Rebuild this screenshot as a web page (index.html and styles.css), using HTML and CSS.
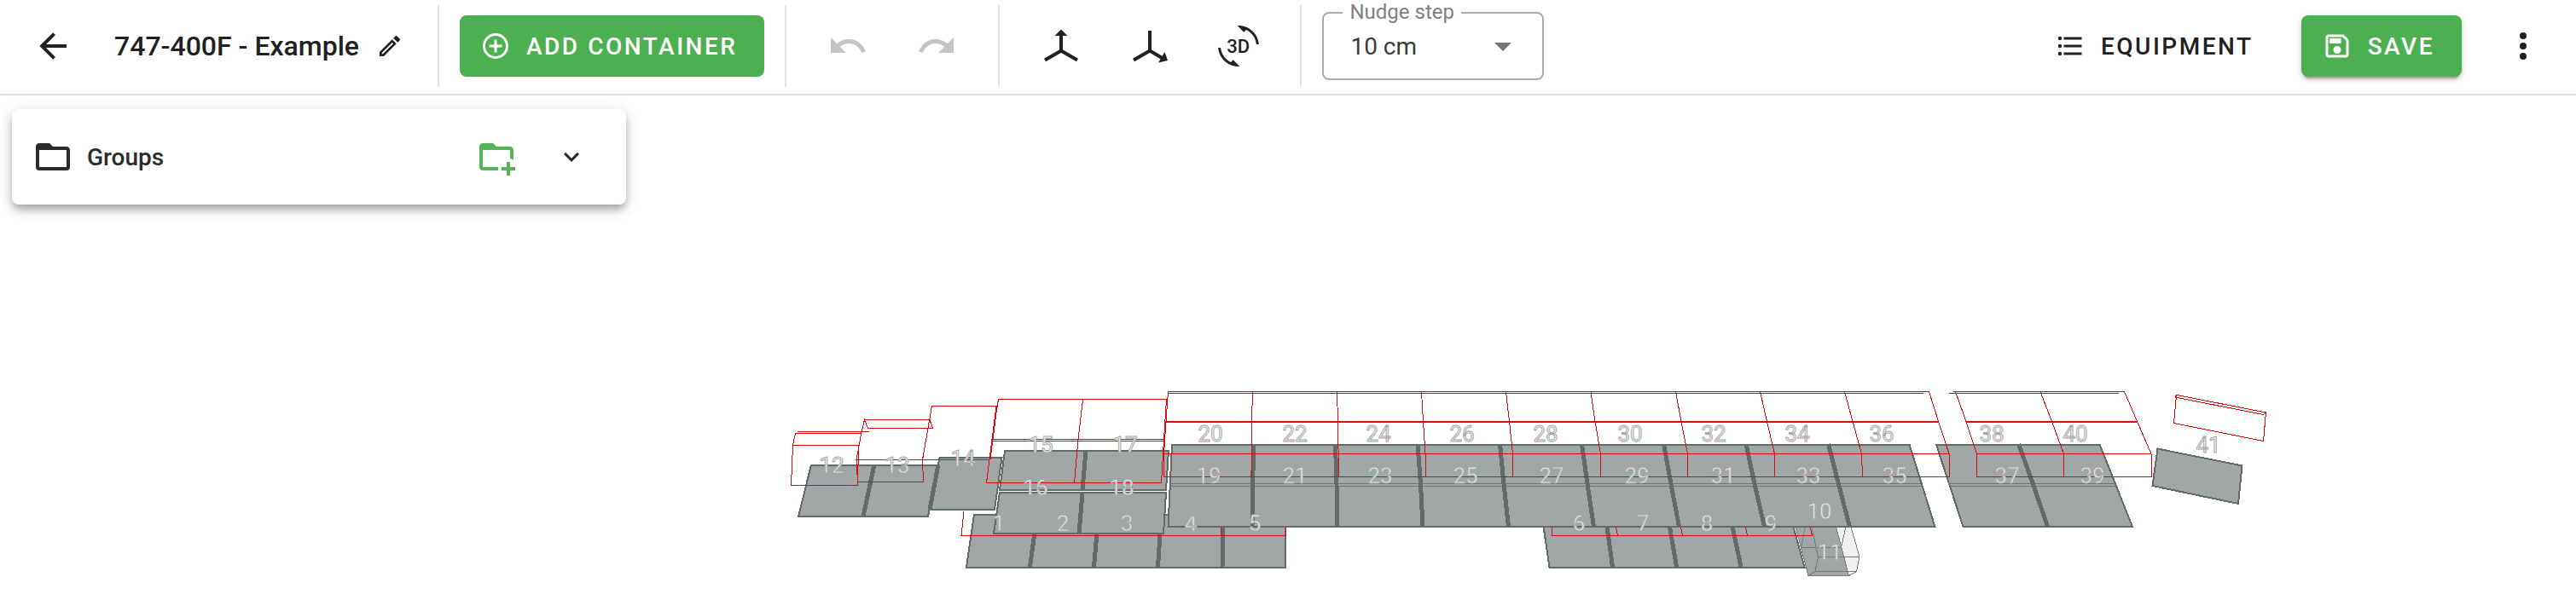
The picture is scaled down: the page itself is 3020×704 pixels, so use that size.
FILE: index.html
```html
<!DOCTYPE html>
<html lang="en">
<head>
<meta charset="utf-8">
<meta name="viewport" content="width=device-width, initial-scale=1">
<title>747-400F - Example</title>
<link rel="stylesheet" href="styles.css">
</head>
<body>
<header class="toolbar">
  <div class="group group-title">
    <button class="icon-btn back" type="button" aria-label="Back"><svg class="icon" viewBox="0 0 24 24"><path d="M20,11V13H8L13.5,18.5L12.08,19.92L4.16,12L12.08,4.08L13.5,5.5L8,11H20Z"/></svg></button>
    <h1 class="title">747-400F - Example</h1>
    <button class="icon-btn" type="button" aria-label="Rename"><svg class="icon icon-small" viewBox="0 0 24 24"><path d="M14.06,9L15,9.94L5.92,19H5V18.08L14.06,9M17.66,3C17.41,3 17.15,3.1 16.96,3.29L15.13,5.12L18.88,8.87L20.71,7.04C21.1,6.65 21.1,6 20.71,5.63L18.37,3.29C18.17,3.09 17.92,3 17.66,3M14.06,6.19L3,17.25V21H6.75L17.81,9.94L14.06,6.19Z"/></svg></button>
  </div>
  <div class="group group-add">
    <button class="btn btn-primary" type="button"><svg class="icon icon-medium" viewBox="0 0 24 24"><path d="M12,20C7.59,20 4,16.41 4,12C4,7.59 7.59,4 12,4C16.41,4 20,7.59 20,12C20,16.41 16.41,20 12,20M12,2A10,10 0 0,0 2,12A10,10 0 0,0 12,22A10,10 0 0,0 22,12A10,10 0 0,0 12,2M13,7H11V11H7V13H11V17H13V13H17V11H13V7Z"/></svg><span>ADD CONTAINER</span></button>
  </div>
  <div class="group group-icons">
    <button class="icon-btn" type="button" aria-label="Undo" disabled><svg class="icon" viewBox="0 0 24 24"><path d="M12.5,8C9.85,8 7.45,9 5.6,10.6L2,7V16H11L7.38,12.38C8.77,11.22 10.54,10.5 12.5,10.5C16.04,10.5 19.05,12.81 20.1,16L22.47,15.22C21.08,11.03 17.15,8 12.5,8Z"/></svg></button>
    <button class="icon-btn" type="button" aria-label="Redo" disabled><svg class="icon" viewBox="0 0 24 24"><path d="M18.4,10.6C16.55,9 14.15,8 11.5,8C6.85,8 2.92,11.03 1.54,15.22L3.9,16C4.95,12.81 7.95,10.5 11.5,10.5C13.45,10.5 15.23,11.22 16.62,12.38L13,16H22V7L18.4,10.6Z"/></svg></button>
  </div>
  <div class="group group-icons">
    <button class="icon-btn" type="button" aria-label="Vertical axis"><svg class="icon" viewBox="0 0 48 48"><path class="axis" d="M24 8V29.5L5 40.5M24 29.5L43 40.5"/><path d="M24 4.5L31.5 12H16.5Z"/></svg></button>
    <button class="icon-btn" type="button" aria-label="Horizontal axis"><svg class="icon" viewBox="0 0 48 48"><path class="axis" d="M24 6V29.5L5 40.5M24 29.5L40 39"/><path d="M41.5 31L45 41L34 43.5Z"/></svg></button>
    <button class="icon-btn" type="button" aria-label="Rotate"><svg class="icon" viewBox="0 0 24 24"><path d="M7.52 21.48C4.25 19.94 1.91 16.76 1.55 13H.05C.56 19.16 5.71 24 12 24l.66-.03-3.81-3.81zM12 0l-.66.03 3.81 3.81 1.33-1.33c3.27 1.55 5.61 4.72 5.96 8.49h1.5C23.44 4.84 18.29 0 12 0z"/><text class="icon-text" x="11.9" y="15.9">3D</text></svg></button>
  </div>
  <div class="group group-field">
    <div class="field">
      <label class="field-label" for="nudge">Nudge step</label>
      <select class="field-select" id="nudge"><option>10 cm</option><option>50 cm</option></select>
      <svg class="icon field-arrow" viewBox="0 0 24 24"><path d="M7,10L12,15L17,10H7Z"/></svg>
    </div>
  </div>
  <div class="actions">
    <button class="btn btn-text" type="button"><svg class="icon icon-medium" viewBox="0 0 24 24"><path d="M7,5H21V7H7V5M7,13V11H21V13H7M4,4.5A1.5,1.5 0 0,1 5.5,6A1.5,1.5 0 0,1 4,7.5A1.5,1.5 0 0,1 2.5,6A1.5,1.5 0 0,1 4,4.5M4,10.5A1.5,1.5 0 0,1 5.5,12A1.5,1.5 0 0,1 4,13.5A1.5,1.5 0 0,1 2.5,12A1.5,1.5 0 0,1 4,10.5M7,19V17H21V19H7M4,16.5A1.5,1.5 0 0,1 5.5,18A1.5,1.5 0 0,1 4,19.5A1.5,1.5 0 0,1 2.5,18A1.5,1.5 0 0,1 4,16.5Z"/></svg><span>EQUIPMENT</span></button>
    <button class="btn btn-primary btn-raised" type="button"><svg class="icon icon-medium" viewBox="0 0 24 24"><path d="M17 3H5C3.89 3 3 3.9 3 5V19C3 20.1 3.89 21 5 21H19C20.1 21 21 20.1 21 19V7L17 3M19 19H5V5H16.17L19 7.83V19M12 12C10.34 12 9 13.34 9 15S10.34 18 12 18 15 16.66 15 15 13.66 12 12 12M6 6H15V10H6V6Z"/></svg><span>SAVE</span></button>
    <button class="icon-btn more" type="button" aria-label="More"><svg class="icon" viewBox="0 0 24 24"><path d="M12,16A2,2 0 0,1 14,18A2,2 0 0,1 12,20A2,2 0 0,1 10,18A2,2 0 0,1 12,16M12,10A2,2 0 0,1 14,12A2,2 0 0,1 12,14A2,2 0 0,1 10,12A2,2 0 0,1 12,10M12,4A2,2 0 0,1 14,6A2,2 0 0,1 12,8A2,2 0 0,1 10,6A2,2 0 0,1 12,4Z"/></svg></button>
  </div>
</header>
<main class="workspace">
  <svg class="scene" viewBox="0 112 3020 592" role="img" aria-label="Aircraft loading positions">
    <!-- lower deck -->
    <g class="deck">
      <path d="M1142 603.5H1507V665.5H1133Z"/>
      <path d="M1804 580H2092L2115.5 665.5H1816.5Z"/>
    </g>
    <path class="rail" d="M1216 603L1207.5 665M1288 603L1282.5 665M1361.5 603L1357.5 665M1434 603L1433 665M1884 618L1890.5 665M1957.5 618L1965.5 665M2031 618L2041 665"/>
    <path class="bulk" d="M2105 618H2152.5L2167.5 675.5H2120Z"/>
    <path class="bulk-light" d="M2152.5 618H2170L2180 653L2176.5 670.5L2167.5 675.5Z"/>
    <path class="bulk-line" d="M2105 618L2120 675.5H2167.5L2176.5 670.5L2180 653L2170 618M2152.5 618L2167.5 675.5M2116.5 618L2111.5 642.5H2158.5L2164 618M2124 618L2131.5 653.5H2180M2131.5 653.5L2128 670.5H2176.5M2128 670.5L2120 675.5"/>
    <path class="bound" d="M1130 600L1127 628.5H1507.5V603M1431.5 618V628M1819 618L1820 628.5H2124.5L2122 618M1894.5 618L1896.5 628M1970.5 618L1972.5 628M2046.5 618L2048.5 628"/>
    <!-- main deck -->
    <path class="gap" d="M1368 528H1374L1370 603H1364Z"/>
    <g class="deck">
      <path d="M951 545.5H1100L1088 606H936Z"/>
      <path d="M1101.5 537H1174.5L1166 598H1090Z"/>
      <path d="M1178 529H1370L1367 575H1172Z"/>
      <path d="M1172 577.5H1367L1364 626H1165Z"/>
      <path d="M1374 521.5H2238.5L2268.5 618H1369.5Z"/>
      <path d="M2270 521.5H2461.5L2500 618H2301.5Z"/>
      <path d="M2529.5 526.5L2628.5 546.5L2624 591L2523.5 570Z"/>
    </g>
    <path class="seam" d="M1371 567.5H2252M1371 570.5H2253M2284 567.5H2480M2286 570.5H2481"/>
    <path class="rail" d="M1025 545L1012 606M1100 545L1090 598M1273 529L1269 575M1269 578L1265 626M1470 521L1468.5 568L1468 618M1565.5 521L1567 568L1567.5 618M1662 521L1665.5 568L1668 618M1758.5 521L1763 568L1768.5 618M1854.5 521L1861 568L1868.5 618M1950.5 521L1959 568L1968.5 618M2047 521L2057 568L2068.5 618M2143.5 521L2155.5 568L2168.5 618M2366.5 521L2383.5 568L2400.5 618"/>
    <!-- contour limits -->
    <path class="bound" d="M934.5 506.5H1018.5M1010 508.5H932.5L929.5 522.5L927.5 569.5H1005.5L1006.5 522.5M929.5 522.5H1006.5
      M1013.5 492.5H1090L1093.5 502.5H1017.5L1013.5 492.5L1010 507L1004 539.5L1005.5 565.5H1082.5L1081.5 539.5L1092.5 476.5H1169L1160 539.5H1004
      M1170.5 468.5H1367.5L1364.5 516L1361.5 566.5H1156.5L1163 516Z M1163 515.5H1364.5M1163 517.5H1364.5M1269.5 468.5L1264 516L1259.5 566.5
      M1369.5 461.5H2255M1364.5 532.5H2285V559.5H1365L1364.5 532.5L1367 494.5L1369.5 459.5H2261.5L2272.5 494.5L2285 532.5
      M1468.5 459.5L1467.5 494.5L1467 559M1567.5 459.5L1568.5 494.5L1569.5 559M1666.5 459.5L1668.5 494.5L1671 532.5V559M1765.5 459.5L1769.5 494.5L1773.5 532.5V559M1865 459.5L1870 494.5L1876.5 532.5V559M1964.5 459.5L1971 494.5L1978.5 532.5V559M2063.5 459.5L2071.5 494.5L2080.5 532.5V559M2162.5 459.5L2172 494.5L2182.5 532.5L2183.5 559
      M2284.5 461.5H2484M2290 459.5H2490.5L2505.5 494.5L2522 532.5L2522.5 559.5H2317.5V532.5L2305 494.5L2292.5 459.5M2317.5 532.5H2522M2392 459.5L2405.5 494.5L2419.5 532.5V559
      M2552 463.5L2656.5 484L2653.5 517.5L2548.5 496.5L2551.5 463.5M2656.5 484L2653.5 486.5L2550 466L2551.5 463.5"/>
    <path class="bound bound-thick" d="M1367 495H2273M2305 495H2506M1168.5 476.5L1160.5 539"/>
    <g class="labels">
      <text x="1171" y="623">1</text><text x="1246" y="623">2</text><text x="1321" y="623">3</text><text x="1396" y="623">4</text><text x="1471" y="623">5</text>
      <text x="1851" y="623">6</text><text x="1926" y="623">7</text><text x="2001" y="623">8</text><text x="2076" y="623">9</text><text x="2133" y="609">10</text><text x="2145" y="657">11</text>
      <text x="975" y="555">12</text><text x="1052" y="555">13</text><text x="1129" y="547">14</text>
      <text x="1220" y="531">15</text><text x="1214" y="581">16</text><text x="1319" y="531">17</text><text x="1315" y="581">18</text>
      <text x="1417" y="567">19</text><text x="1419" y="518">20</text><text x="1518" y="567">21</text><text x="1518" y="518">22</text><text x="1618" y="567">23</text><text x="1616" y="518">24</text><text x="1718" y="567">25</text><text x="1714" y="518">26</text><text x="1819" y="567">27</text><text x="1812" y="518">28</text><text x="1919" y="567">29</text><text x="1911" y="518">30</text><text x="2020" y="567">31</text><text x="2009" y="518">32</text><text x="2120" y="567">33</text><text x="2107" y="518">34</text><text x="2221" y="567">35</text><text x="2206" y="518">36</text>
      <text x="2353" y="567">37</text><text x="2335" y="518">38</text><text x="2453" y="567">39</text><text x="2433" y="518">40</text><text x="2589" y="531">41</text>
    </g>
  </svg>
  <section class="panel">
    <svg class="icon" viewBox="0 0 24 24"><path d="M20,18H4V8H20M20,6H12L10,4H4C2.89,4 2,4.89 2,6V18A2,2 0 0,0 4,20H20A2,2 0 0,0 22,18V8C22,6.89 21.1,6 20,6Z"/></svg>
    <h2 class="panel-title">Groups</h2>
    <button class="icon-btn panel-add" type="button" aria-label="Add group"><svg class="icon" viewBox="0 0 24 24"><path d="M13 19C13 19.34 13.04 19.67 13.09 20H4C2.9 20 2 19.11 2 18V6C2 4.89 2.89 4 4 4H10L12 6H20C21.1 6 22 6.89 22 8V13.81C21.39 13.46 20.72 13.22 20 13.09V8H4V18H13.09C13.04 18.33 13 18.66 13 19M20 18V15H18V18H15V20H18V23H20V20H23V18H20Z"/></svg></button>
    <button class="icon-btn" type="button" aria-label="Expand"><svg class="icon icon-medium" viewBox="0 0 24 24"><path d="M7.41,8.58L12,13.17L16.59,8.58L18,10L12,16L6,10L7.41,8.58Z"/></svg></button>
  </section>
</main>
</body>
</html>
```
FILE: styles.css
```css
* { box-sizing: border-box; }

body {
  margin: 0;
  background: #fff;
  color: #212121;
  font-family: Roboto, "Liberation Sans", sans-serif;
  font-size: 28px;
}

button {
  margin: 0;
  border: 0;
  background: none;
  color: inherit;
  font: inherit;
  cursor: pointer;
}

.toolbar {
  display: flex;
  align-items: center;
  padding: 6px 38px 8px;
  border-bottom: 2px solid #e0e0e0;
}

.group {
  display: flex;
  align-items: center;
  min-height: 96px;
  border-right: 2px solid #e4e4e4;
}

.group-title { padding-right: 40px; }
.group-add { padding: 0 24px; }
.group-icons { gap: 56px; padding: 0 48px; }
.group-field { padding-left: 24px; border-right: 0; }

.icon {
  display: block;
  flex: none;
  width: 48px;
  height: 48px;
  fill: currentColor;
}

.icon-medium { width: 36px; height: 36px; }
.icon-small { width: 32px; height: 32px; }

.icon-btn { flex: none; padding: 0; }
.icon-btn:disabled { color: #c4c4c4; }

.axis { fill: none; stroke: currentColor; stroke-width: 4; }

.icon-text {
  font-size: 11px;
  font-weight: 500;
  text-anchor: middle;
}

.back { margin-right: 48px; }

.title {
  margin: 0 20px 0 0;
  font-size: 32px;
  font-weight: 500;
  line-height: 40px;
  white-space: nowrap;
}

.btn {
  display: flex;
  align-items: center;
  gap: 18px;
  height: 72px;
  padding: 0 32px 0 24px;
  border-radius: 8px;
  font-weight: 500;
  letter-spacing: 0.09em;
  white-space: nowrap;
}

.btn-primary { background: #4caf50; color: #fff; }

.btn-raised {
  box-shadow: 0 6px 2px -4px rgba(0, 0, 0, 0.2), 0 4px 4px rgba(0, 0, 0, 0.14), 0 2px 10px rgba(0, 0, 0, 0.12);
}

.actions {
  display: flex;
  align-items: center;
  gap: 24px;
  margin-left: auto;
}

.more { margin-left: 24px; }

.field {
  position: relative;
  width: 260px;
}

.field-select {
  display: block;
  width: 100%;
  height: 80px;
  padding: 0 72px 0 31px;
  border: 2px solid #ababab;
  border-radius: 8px;
  background: #fff;
  color: #3c3c3c;
  font: inherit;
  appearance: none;
}

.field-label {
  position: absolute;
  top: -14px;
  left: 24px;
  padding: 0 8px;
  background: #fff;
  color: #7f7f7f;
  font-size: 24px;
  line-height: 28px;
  white-space: nowrap;
}

.field-arrow {
  position: absolute;
  top: 16px;
  right: 24px;
  color: #757575;
  pointer-events: none;
}

.workspace {
  position: relative;
  overflow: hidden;
}

.scene {
  display: block;
  width: 100%;
  height: auto;
  shape-rendering: crispEdges;
}

.deck { fill: #a1a7a6; stroke: #656968; stroke-width: 2; }
.rail { fill: none; stroke: #656968; stroke-width: 5; }
.seam { fill: none; stroke: #707473; stroke-width: 1; }
.gap { fill: #fff; }
.bulk { fill: #a1a7a6; }
.bulk-light { fill: #f0f0f0; }
.bulk-line { fill: none; stroke: #777a79; stroke-width: 1; }
.bound { fill: none; stroke: #d80c0c; stroke-width: 1; }
.bound-thick { stroke-width: 2; }

.labels {
  fill: #f4f4f4;
  stroke: #a6a6a6;
  stroke-width: 1;
  font-size: 26px;
  text-anchor: middle;
}

.panel {
  position: absolute;
  top: 16px;
  left: 14px;
  display: flex;
  align-items: center;
  width: 720px;
  max-width: calc(100% - 28px);
  height: 112px;
  padding: 0 46px 0 24px;
  border-radius: 8px;
  background: #fff;
  color: #2b2b2b;
  box-shadow: 0 6px 10px -2px rgba(0, 0, 0, 0.25), 0 8px 14px rgba(0, 0, 0, 0.12), 0 2px 20px rgba(0, 0, 0, 0.1);
}

.panel-title {
  margin: 0 auto 0 16px;
  font-size: 28px;
  font-weight: 500;
}

.panel-add { margin-right: 46px; color: #55b359; }
```
